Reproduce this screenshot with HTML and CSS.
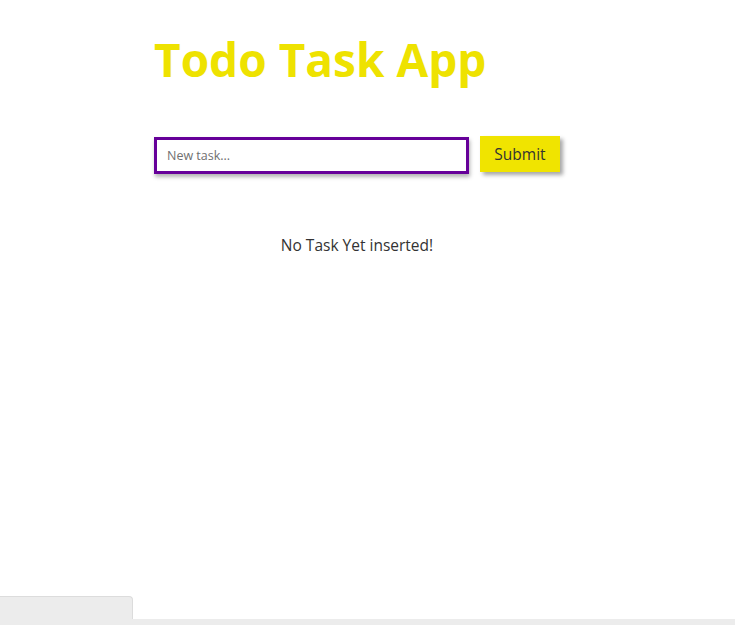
FILE: index.html
```html
<!DOCTYPE html>
<html lang="en">
<head>
<meta charset="utf-8">
<title>Todo Task App</title>
<link rel="stylesheet" href="styles.css">
</head>
<body>
<main class="app">
  <h1 class="title">Todo Task App</h1>
  <form class="task-form">
    <input class="task-input" type="text" placeholder="New task...">
    <button class="submit-btn" type="button">Submit</button>
  </form>
  <p class="empty">No Task Yet inserted!</p>
</main>
<footer class="bottom">
  <div class="tab"></div>
  <div class="strip"></div>
</footer>
</body>
</html>
```

FILE: styles.css
```css
html, body {
  margin: 0;
  padding: 0;
  height: 100%;
}
body {
  display: flex;
  flex-direction: column;
  min-height: 100vh;
  background: #fff;
  font-family: "Open Sans", "Noto Sans", sans-serif;
  color: #333;
}
.app {
  width: 406px;
  margin-left: 154px;
  display: flex;
  flex-direction: column;
}
.title {
  margin: 28px 0 0 0;
  font-size: 46px;
  font-weight: 700;
  line-height: 62px;
  color: #eee200;
}
.task-form {
  display: flex;
  align-items: flex-start;
  gap: 11px;
  margin-top: 46px;
}
.task-input {
  box-sizing: border-box;
  width: 315px;
  height: 37px;
  margin-top: 1px;
  border: 3px solid #660099;
  padding: 0 10px;
  font-family: inherit;
  font-size: 12.5px;
  color: #333;
  box-shadow: 1px 3px 4px rgba(0,0,0,0.3);
  outline: none;
}
.task-input::placeholder {
  color: #707070;
}
.submit-btn {
  box-sizing: border-box;
  width: 80px;
  height: 36px;
  border: none;
  background: #f0e400;
  font-family: inherit;
  font-size: 15.5px;
  color: #333;
  box-shadow: 3px 3px 4px rgba(0,0,0,0.35);
  padding: 0;
}
.empty {
  margin: 60px 0 0 0;
  text-align: center;
  font-size: 15.5px;
  line-height: 22px;
  color: #333;
}
.bottom {
  margin-top: auto;
  display: flex;
  flex-direction: column;
}
.tab {
  width: 132px;
  height: 22px;
  background: #ececec;
  border-top: 1px solid #dcdcdc;
  border-right: 1px solid #dcdcdc;
  border-top-right-radius: 4px;
}
.strip {
  height: 6px;
  background: #ececec;
}
```
